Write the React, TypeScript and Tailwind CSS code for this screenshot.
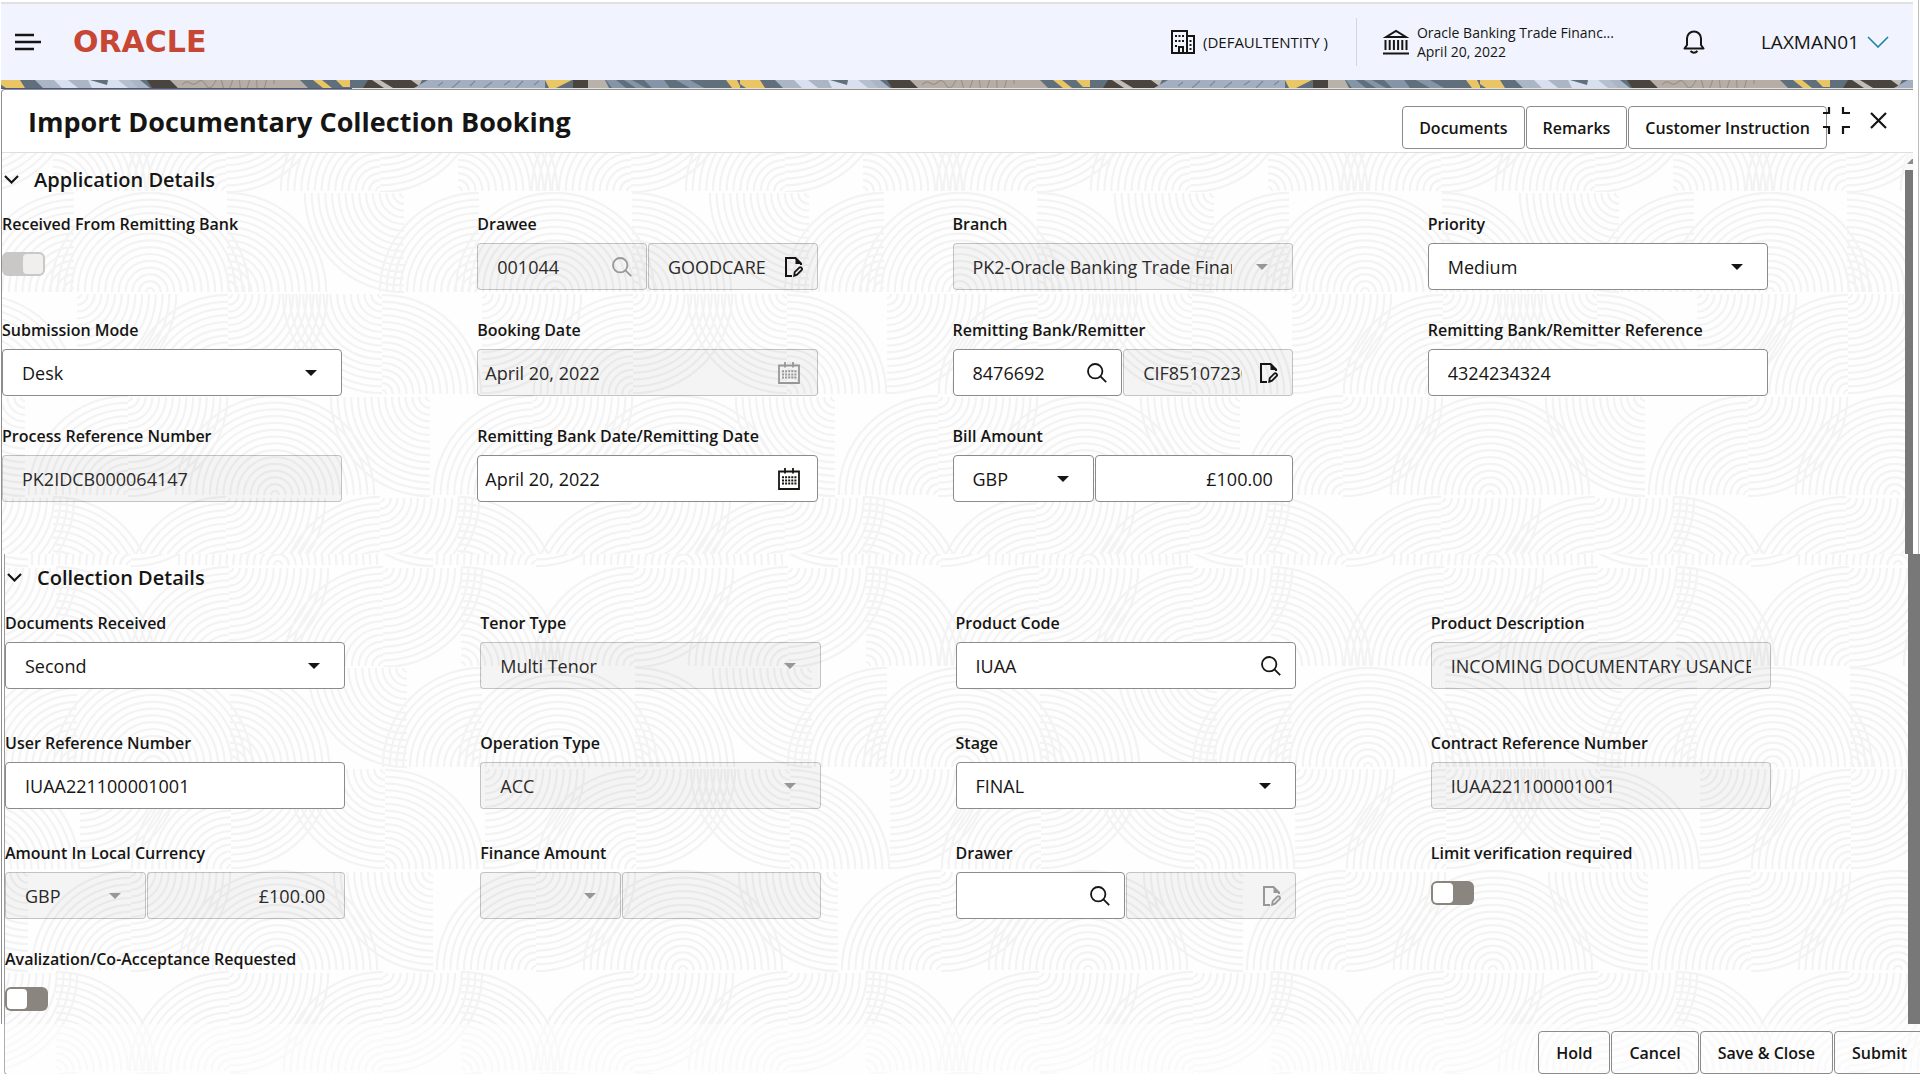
import { useId, type ReactNode } from "react";
import { clsx } from "clsx";

type Corner = "tl" | "tr" | "bl" | "br";

// [centre x, centre y, quadrant the arcs are drawn in]
const WAVES: [number, number, Corner][] = [
  [74, 100, "tl"],
  [150, 100, "tl"],
  [150, 100, "tr"],
  [227, 100, "tr"],
  [404, 1, "bl"],
  [77, 102, "br"],
  [228, 202, "tl"],
  [228, 102, "br"],
  [382, 102, "bl"],
  [382, 202, "tr"],
  [25, 205, "bl"],
  [128, 303, "tl"],
  [128, 205, "br"],
  [275, 303, "tl"],
  [275, 303, "tr"],
  [380, 306, "br"],
  [53, 404, "tr"],
  [226, 404, "tl"],
  [226, 306, "br"],
  [380, 404, "tl"],
];

const RADII = Array.from({ length: 15 }, (_, i) => 4 + i * 6.8);

function arcs(cx: number, cy: number, corner: Corner) {
  const sx = corner.endsWith("l") ? -1 : 1;
  const sy = corner.startsWith("t") ? -1 : 1;
  const sweep = sx * sy > 0 ? 0 : 1;
  return RADII.map((r) => `M${cx} ${cy + sy * r}A${r} ${r} 0 0 ${sweep} ${cx + sx * r} ${cy}`).join("");
}

const WAVE_PATH = WAVES.map(([x, y, corner]) =>
  [x - 405, x, x + 405].map((cx) => arcs(cx, y, corner)).join(""),
).join("");

function Waves({ x, y, faded }: { x: number; y: number; faded?: boolean }) {
  const id = useId();
  return (
    <svg
      aria-hidden="true"
      className={clsx("pointer-events-none absolute inset-0 h-full w-full", faded && "opacity-40")}
    >
      <defs>
        <pattern id={id} x={x} y={y} width="405" height="405" patternUnits="userSpaceOnUse">
          <path d={WAVE_PATH} fill="none" stroke="#f3f3f3" strokeWidth="2.2" />
        </pattern>
      </defs>
      <rect width="100%" height="100%" fill={`url(#${id})`} />
    </svg>
  );
}

function Ribbon() {
  return (
    <svg aria-hidden="true" className="block h-2 w-full">
      <defs>
        <pattern id="ribbon" x="-1" width="740" height="8" patternUnits="userSpaceOnUse">
          <rect width="740" height="8" fill="#5f6f7b" />
          <path d="M0 0H20L25 8H6L0 4Z" fill="#e9c565" />
          <path d="M35 0H140L150 8H43Z" fill="#aab6c6" />
          <path d="M54 0H68L78 8H62ZM88 0H124L132 8H92Z" fill="#d8e0f0" />
          <path d="M90 0H108L107 5Z" fill="#5f6f7b" />
          <path d="M118 0H130L138 8H128Z" fill="#b4bfcf" />
          <path d="M147 0H170L178 8H152Z" fill="#4a443f" />
          <path d="M170 0H300L308 8H178Z" fill="#b5ada6" />
          <path
            d="M182 5q4-5 8-2t8-1 8 3 9-3 8 4 9-4 8 3 9-3 8 4 9-4 8 2"
            fill="none"
            stroke="#9a928b"
            strokeWidth="1.2"
          />
          <path d="M313 0H322L332 8H323ZM336 0H350V7H343Z" fill="#e9c565" />
          <path d="M368 0H415L423 8H363Z" fill="#4a443f" />
          <path d="M372 0H380L393 8H384ZM411 0H422L419 6Z" fill="#c3bdb7" />
          <path d="M428 0H545V8H414Z" fill="#a3afc0" />
          <path
            d="M438 6l5-4M452 8l8-7M470 6l5-5M484 8l8-6M504 5l6-4M516 8l7-7M534 5l5-4"
            stroke="#7c8998"
            strokeWidth="1.2"
          />
          <path d="M545 0H572L556 8H549Z" fill="#eac766" />
          <path d="M573 0H588V8H573Z" fill="#4a443f" />
          <path d="M588 0H605L609 8H588Z" fill="#b9b2ab" />
          <path
            d="M606 0H616L626 8H612ZM624 0H632L646 8H636ZM644 0H664L670 8H652ZM676 0H690L704 8H690Z"
            fill="#8595a8"
          />
          <path d="M726 0H737L740 6V8H732Z" fill="#e9c565" />
        </pattern>
      </defs>
      <rect width="100%" height="8" fill="url(#ribbon)" />
    </svg>
  );
}

function SearchIcon() {
  return (
    <svg width="20" height="20" viewBox="0 0 20 20" fill="none" stroke="currentColor" strokeWidth="1.8">
      <circle cx="8.2" cy="8.2" r="7.2" />
      <path d="M13.2 13.2l6 6" />
    </svg>
  );
}

function EditDocIcon() {
  return (
    <svg width="18" height="20" viewBox="0 0 18 20" fill="none" stroke="currentColor" strokeWidth="2">
      <path d="M7 19H1V1h9.5L16 6.5V8" />
      <path d="M10.5 1.5V7H16Z" fill="currentColor" stroke="none" />
      <path d="M9.2 18.8l.5-3.6 4.8-4.8q.8-.6 1.6.1l.7.8q.6.8 0 1.5l-4.8 4.9z" strokeWidth="1.8" />
    </svg>
  );
}

function CalendarIcon() {
  return (
    <svg width="22" height="22" viewBox="0 0 22 22" fill="none" stroke="currentColor">
      <path d="M1 3.5H21V21H1Z" strokeWidth="1.8" />
      <path d="M7 0V5.5M15 0V5.5" strokeWidth="1.8" />
      <path d="M4 9.2H18.5M4 12.4H18.5M4 15.6H18.5" strokeWidth="2" strokeDasharray="2 1.1" />
    </svg>
  );
}

function Caret() {
  return (
    <svg width="12" height="6" viewBox="0 0 12 6" fill="currentColor">
      <path d="M0 0H12L6 6Z" />
    </svg>
  );
}

const box = "h-[47px] w-full rounded border text-lg outline-none";
const enabledBox = "border-[#8b8b8b] bg-white text-[#161513]";
const disabledBox = "border-black/20 bg-black/4 text-[#2b2a29] opacity-100";

function Field({ label, id, children }: { label: string; id: string; children: ReactNode }) {
  return (
    <div className="min-w-0">
      <label htmlFor={id} className="mb-[9px] block text-base leading-5 font-semibold whitespace-nowrap">
        {label}
      </label>
      <div className="flex">{children}</div>
    </div>
  );
}

type ControlProps = {
  id: string;
  value?: string;
  disabled?: boolean;
  label?: string;
  className?: string;
};

function Select({ id, value = "", disabled, label, className }: ControlProps) {
  return (
    <div className={clsx("relative min-w-0", className ?? "flex-1")}>
      <select
        id={id}
        aria-label={label}
        defaultValue={value}
        disabled={disabled}
        className={clsx(box, "appearance-none pr-[60px] pl-[19px]", disabled ? disabledBox : enabledBox)}
      >
        <option value={value}>{value}</option>
      </select>
      <span
        className={clsx(
          "pointer-events-none absolute inset-y-0 right-[25px] flex items-center",
          disabled && "text-[#979797]",
        )}
      >
        <Caret />
      </span>
    </div>
  );
}

type InputProps = ControlProps & {
  icon?: "search" | "edit" | "calendar";
  iconMuted?: boolean;
  align?: "right";
};

const ICONS = {
  search: { node: <SearchIcon />, name: "Search" },
  edit: { node: <EditDocIcon />, name: "View details" },
  calendar: { node: <CalendarIcon />, name: "Select date" },
};

function Input({ id, value, disabled, label, className, icon, iconMuted, align }: InputProps) {
  return (
    <div className={clsx("relative min-w-0", className ?? "flex-1")}>
      <input
        id={id}
        aria-label={label}
        defaultValue={value}
        disabled={disabled}
        className={clsx(
          box,
          icon === "calendar" ? "pl-[7px]" : "pl-[19px]",
          icon ? "pr-[50px]" : "pr-[19px]",
          align === "right" && "text-right",
          disabled ? disabledBox : enabledBox,
        )}
      />
      {icon && (
        <button
          type="button"
          aria-label={ICONS[icon].name}
          className={clsx(
            "absolute inset-y-0 flex items-center",
            icon === "calendar" ? "right-[18px]" : "right-[15px]",
            iconMuted && "text-[#979797]",
          )}
        >
          {ICONS[icon].node}
        </button>
      )}
    </div>
  );
}

function Toggle({ id, on, disabled }: { id: string; on?: boolean; disabled?: boolean }) {
  return (
    <input
      id={id}
      type="checkbox"
      role="switch"
      defaultChecked={on}
      disabled={disabled}
      className="mt-[9px] h-6 w-[43px] appearance-none rounded-md bg-[#8b8580] p-[2px] before:block before:h-5 before:w-5 before:rounded before:bg-white checked:before:ml-auto disabled:bg-[#c9c8c7] disabled:before:bg-[#f0efee]"
    />
  );
}

function SectionTitle({ children, className }: { children: string; className: string }) {
  return (
    <h2 className={clsx("flex items-center pl-[2px]", className)}>
      <button type="button" className="flex items-center gap-[15px] text-xl font-semibold">
        <svg width="15" height="9" viewBox="0 0 15 9" fill="none" stroke="currentColor" strokeWidth="2.2">
          <path d="M1 1L7.5 7.5L14 1" />
        </svg>
        {children}
      </button>
    </h2>
  );
}

function Row({ children, className }: { children: ReactNode; className?: string }) {
  return <div className={clsx("grid grid-cols-4 gap-x-[135px]", className)}>{children}</div>;
}

function OutlineButton({ children, className = "px-4" }: { children: string; className?: string }) {
  return (
    <button
      type="button"
      className={clsx(
        "h-[43px] shrink-0 rounded border border-[#8b8b8b] bg-transparent text-base font-semibold whitespace-nowrap",
        className,
      )}
    >
      {children}
    </button>
  );
}

function Header() {
  return (
    <header className="flex h-[78px] items-center border-t-2 border-[#dfe2e1] bg-[#f1f4fe] pr-6 pl-[14px]">
      <button type="button" aria-label="Menu">
        <svg width="26" height="18" viewBox="0 0 26 18" stroke="#161513" strokeWidth="2.4">
          <path d="M0 2H19M0 9H26M0 16H19" />
        </svg>
      </button>
      <div className="ml-8 font-['DejaVu_Sans'] text-[30px] leading-8 font-bold text-[#c74634]">ORACLE</div>
      <div className="ml-auto flex items-center">
        <svg width="24" height="24" viewBox="0 0 24 24" fill="none" stroke="#161513" strokeWidth="2">
          <path d="M1 23V1H16V23M16 6H23V23H0" />
          <path d="M8 23V17H12V23" />
          <path d="M5 5V7M8.500 5V7M12 5V7M5 10V12M8.500 10V12M12 10V12M5 15V17M19.500 10V12M19.500 14V16M19.500 18V20" />
        </svg>
        <span className="ml-2 text-[15px]">(DEFAULTENTITY )</span>
        <div className="ml-7 h-12 border-l border-[#d3d6de]" />
        <svg
          className="ml-[26px]"
          width="26"
          height="26"
          viewBox="0 0 26 26"
          fill="none"
          stroke="#161513"
          strokeWidth="2"
        >
          <path d="M3 8L13 2L23 8Z" />
          <path d="M2.500 11V21M6.700 11V21M10.900 11V21M15.100 11V21M19.300 11V21M23.500 11V21M0 24.500H26" />
        </svg>
        <div className="ml-2 w-[202px] text-sm leading-[19px] whitespace-nowrap">
          <div>Oracle Banking Trade Financ...</div>
          <div>April 20, 2022</div>
        </div>
        <button type="button" aria-label="Notifications" className="ml-16">
          <svg width="22" height="24" viewBox="0 0 22 24" fill="none" stroke="#161513" strokeWidth="2">
            <path d="M1.500 18.500H20.500L18 15V8.500a7 7 0 0 0-14 0V15Z" strokeLinejoin="round" />
            <path d="M7.500 21q3.500 3.500 7 0" />
          </svg>
        </button>
        <button type="button" className="ml-14 flex items-center gap-2 text-[19px]">
          LAXMAN01
          <svg width="22" height="12" viewBox="0 0 22 12" fill="none" stroke="#1a83a6" strokeWidth="1.6">
            <path d="M1 1L11 11L21 1" />
          </svg>
        </button>
      </div>
    </header>
  );
}

function TitleBar() {
  return (
    <div className="flex h-[63px] items-start border-b border-[#dedede] pl-[26px]">
      <h1 className="mt-[14px] text-[27px] leading-9 font-bold">Import Documentary Collection Booking</h1>
      <div className="mt-4 ml-auto flex gap-px">
        <OutlineButton>Documents</OutlineButton>
        <OutlineButton>Remarks</OutlineButton>
        <OutlineButton>Customer Instruction</OutlineButton>
      </div>
      <button type="button" aria-label="Collapse" className="z-10 mt-[17px] -ml-1">
        <svg width="27" height="27" viewBox="0 0 27 27" fill="none" stroke="#161513" strokeWidth="2.2">
          <path d="M6 0V6H0M20 0V6H27M6 27V20H0M20 27V20H27" />
        </svg>
      </button>
      <button type="button" aria-label="Close" className="mt-[22px] mr-[26px] ml-5">
        <svg width="17" height="17" viewBox="0 0 17 17" stroke="#161513" strokeWidth="2.2">
          <path d="M1 1L16 16M16 1L1 16" />
        </svg>
      </button>
    </div>
  );
}

function ApplicationDetails() {
  return (
    <section className="relative flex bg-[#fefefe]">
      <Waves x={-2} y={39} />
      <div className="relative flex-1 pr-[137px] pb-[52px]">
        <SectionTitle className="h-[53px]">Application Details</SectionTitle>
        <Row className="mt-2">
          <Field label="Received From Remitting Bank" id="received">
            <Toggle id="received" on disabled />
          </Field>
          <Field label="Drawee" id="drawee">
            <div className="flex w-full gap-px">
              <Input id="drawee" value="001044" disabled icon="search" iconMuted />
              <Input id="drawee-name" label="Drawee name" value="GOODCARE PLC" disabled icon="edit" />
            </div>
          </Field>
          <Field label="Branch" id="branch">
            <Select id="branch" value="PK2-Oracle Banking Trade Finance" disabled />
          </Field>
          <Field label="Priority" id="priority">
            <Select id="priority" value="Medium" />
          </Field>
        </Row>
        <Row className="mt-[30px]">
          <Field label="Submission Mode" id="mode">
            <Select id="mode" value="Desk" />
          </Field>
          <Field label="Booking Date" id="booking-date">
            <Input id="booking-date" value="April 20, 2022" disabled icon="calendar" iconMuted />
          </Field>
          <Field label="Remitting Bank/Remitter" id="remitter">
            <div className="flex w-full gap-px">
              <Input id="remitter" value="8476692" icon="search" />
              <Input id="remitter-name" label="Remitter name" value="CIF85107230" disabled icon="edit" />
            </div>
          </Field>
          <Field label="Remitting Bank/Remitter Reference" id="remitter-ref">
            <Input id="remitter-ref" value="4324234324" />
          </Field>
        </Row>
        <Row className="mt-[30px]">
          <Field label="Process Reference Number" id="process-ref">
            <Input id="process-ref" value="PK2IDCB000064147" disabled />
          </Field>
          <Field label="Remitting Bank Date/Remitting Date" id="remitting-date">
            <Input id="remitting-date" value="April 20, 2022" icon="calendar" />
          </Field>
          <Field label="Bill Amount" id="bill-amount">
            <div className="flex w-full gap-px">
              <Select id="bill-currency" label="Bill currency" value="GBP" className="w-[141px]" />
              <Input id="bill-amount" value="£100.00" align="right" />
            </div>
          </Field>
        </Row>
      </div>
      <div aria-hidden="true" className="relative flex w-2 flex-col items-end bg-[#f8f8f8]">
        <svg className="my-[6px]" width="6" height="5" viewBox="0 0 6 5" fill="#8b8b8b">
          <path d="M0 5L5 0H6V5Z" />
        </svg>
        <div className="w-full flex-1 bg-[#787878]" />
      </div>
    </section>
  );
}

function CollectionDetails() {
  return (
    <div className="ml-px border-l border-[#8f8f8f] pl-[2px]">
      <section className="relative flex border-l border-[#9a9a9a] bg-[#fefefe]">
        <Waves x={-2} y={113} />
        <div className="relative flex-1 pr-[137px] pb-[13px]">
          <SectionTitle className="h-[47px]">Collection Details</SectionTitle>
          <Row className="mt-3">
            <Field label="Documents Received" id="documents">
              <Select id="documents" value="Second" />
            </Field>
            <Field label="Tenor Type" id="tenor">
              <Select id="tenor" value="Multi Tenor" disabled />
            </Field>
            <Field label="Product Code" id="product-code">
              <Input id="product-code" value="IUAA" icon="search" />
            </Field>
            <Field label="Product Description" id="product-description">
              <Input id="product-description" value="INCOMING DOCUMENTARY USANCE" disabled />
            </Field>
          </Row>
          <Row className="mt-11">
            <Field label="User Reference Number" id="user-ref">
              <Input id="user-ref" value="IUAA221100001001" />
            </Field>
            <Field label="Operation Type" id="operation">
              <Select id="operation" value="ACC" disabled />
            </Field>
            <Field label="Stage" id="stage">
              <Select id="stage" value="FINAL" />
            </Field>
            <Field label="Contract Reference Number" id="contract-ref">
              <Input id="contract-ref" value="IUAA221100001001" disabled />
            </Field>
          </Row>
          <Row className="mt-[34px]">
            <Field label="Amount In Local Currency" id="local-amount">
              <div className="flex w-full gap-px">
                <Select id="local-currency" label="Local currency" value="GBP" disabled className="w-[141px]" />
                <Input id="local-amount" value="£100.00" align="right" disabled />
              </div>
            </Field>
            <Field label="Finance Amount" id="finance-amount">
              <div className="flex w-full gap-px">
                <Select id="finance-currency" label="Finance currency" disabled className="w-[141px]" />
                <Input id="finance-amount" disabled />
              </div>
            </Field>
            <Field label="Drawer" id="drawer">
              <div className="flex w-full gap-px">
                <Input id="drawer" icon="search" />
                <Input id="drawer-name" label="Drawer name" disabled icon="edit" iconMuted />
              </div>
            </Field>
            <Field label="Limit verification required" id="limit">
              <Toggle id="limit" />
            </Field>
          </Row>
          <Row className="mt-[30px]">
            <Field label="Avalization/Co-Acceptance Requested" id="avalization">
              <Toggle id="avalization" />
            </Field>
          </Row>
        </div>
        <div aria-hidden="true" className="relative w-3 bg-[#787878]" />
      </section>
    </div>
  );
}

export default function App() {
  return (
    <div className="flex min-h-screen w-full flex-col overflow-hidden bg-white font-['Open_Sans',sans-serif] text-[#161513]">
      <div className="mr-px border-r border-[#bdbdbd] pt-[2px] pr-[5px] pl-px">
        <Header />
        <div className="bg-[#4b5689]">
          <Ribbon />
          <div className="flex h-px">
            <div className="w-[351px]" />
            <div className="flex-1 bg-[#e4e1de]" />
          </div>
        </div>
        <div className="rounded-tl border-t border-l border-[#8f8f8f]">
          <TitleBar />
          <ApplicationDetails />
        </div>
      </div>
      <CollectionDetails />
      <footer className="relative ml-1 flex flex-1 justify-end overflow-hidden rounded-bl border-b border-l border-[#b5aea8] bg-[#fefefe] pt-[7px]">
        <Waves x={-2} y={48} faded />
        <div className="relative -mr-[5px] flex gap-px">
          <OutlineButton className="px-[17px]">Hold</OutlineButton>
          <OutlineButton className="px-[17px]">Cancel</OutlineButton>
          <OutlineButton className="px-[17px]">Save & Close</OutlineButton>
          <OutlineButton className="px-[17px]">Submit</OutlineButton>
        </div>
      </footer>
    </div>
  );
}
